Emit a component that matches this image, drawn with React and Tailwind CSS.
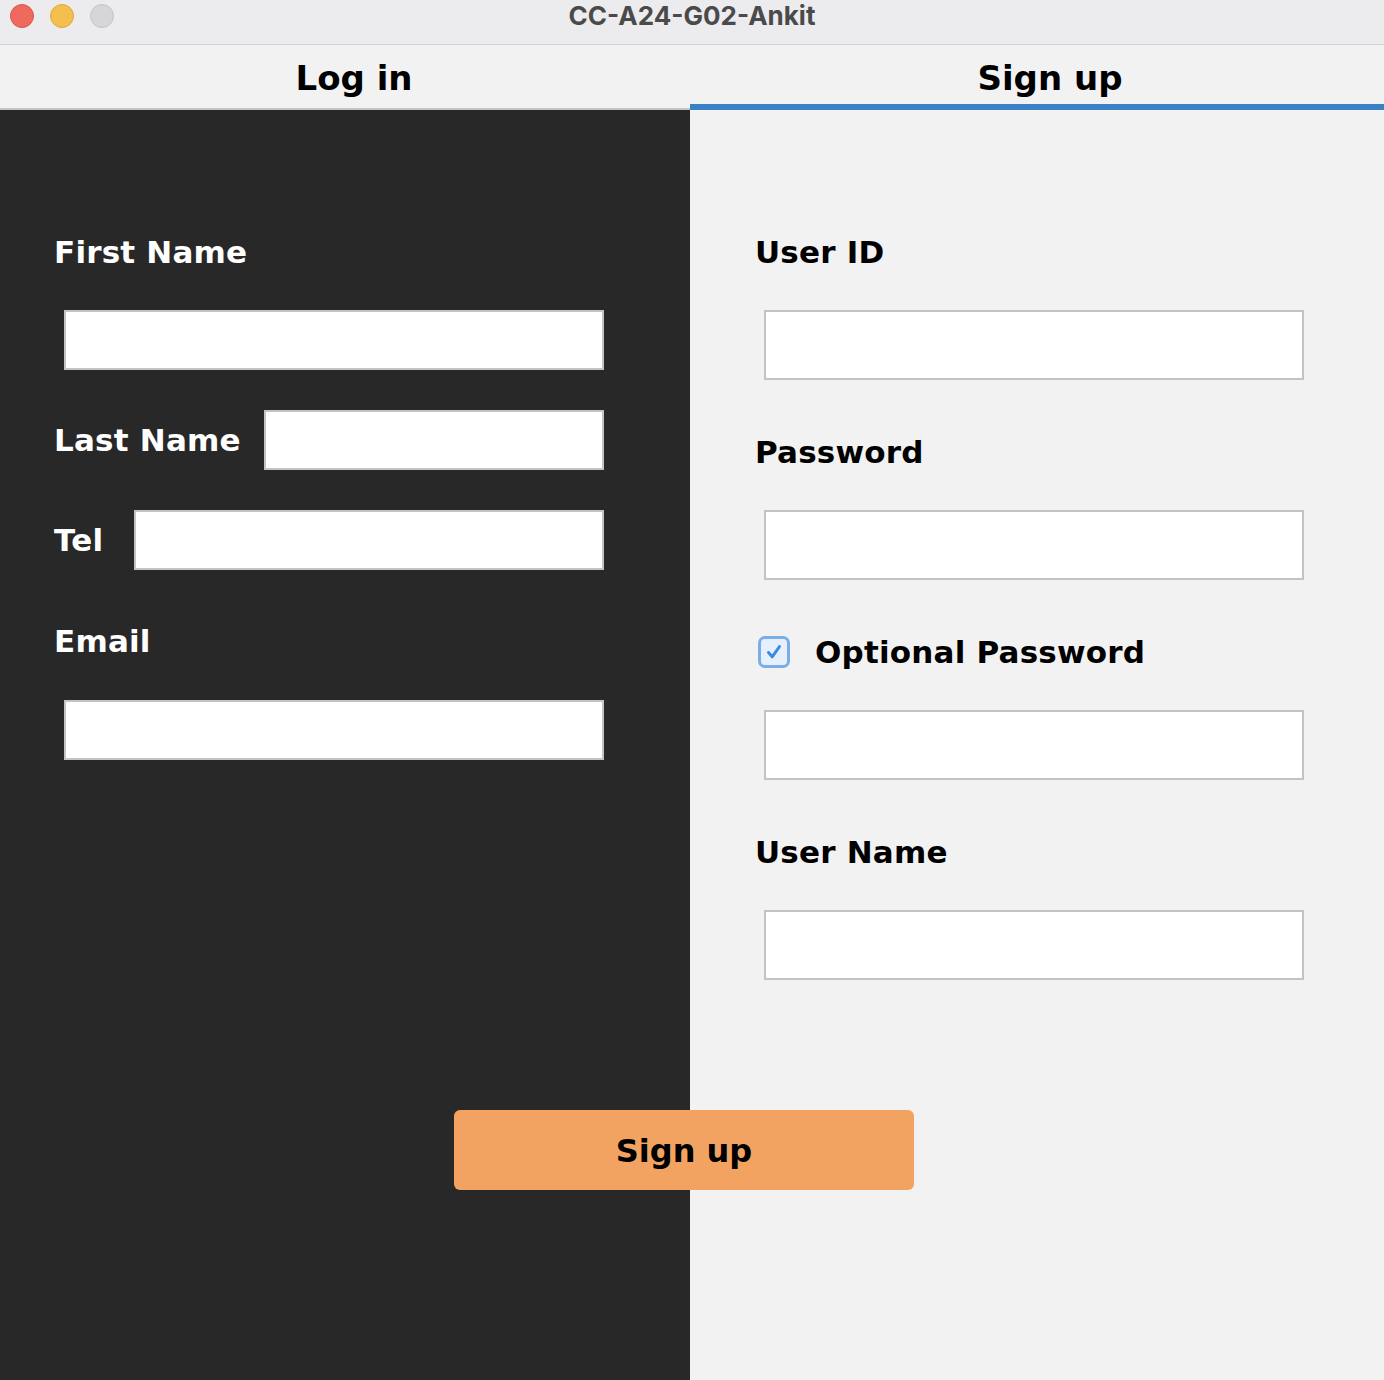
import React from "react";

const font = { fontFamily: '"DejaVu Sans", "Noto Sans", sans-serif' };

function Field({ className = "" }) {
  return (
    <input
      type="text"
      className={`block bg-white border-2 border-[#c3c3c3] outline-none ${className}`}
    />
  );
}

function Label({ children, dark }) {
  return (
    <div
      className={`h-[40px] flex items-center text-[31px] font-bold tracking-[0.2px] leading-none ${
        dark ? "text-white" : "text-black"
      }`}
    >
      {children}
    </div>
  );
}

export default function App() {
  return (
    <div className="relative w-[1384px] h-[1380px] flex flex-col bg-[#f2f2f2]" style={font}>
      <div className="h-[45px] shrink-0 flex items-start relative bg-[#ececee] border-b border-[#d2d2d2]">
        <div className="flex items-center gap-[16px] pl-[10px] pt-[4px]">
          <span className="w-[24px] h-[24px] rounded-full bg-[#ee6a5f] border border-[#d9564c]" />
          <span className="w-[24px] h-[24px] rounded-full bg-[#f5bf4f] border border-[#dca73e]" />
          <span className="w-[24px] h-[24px] rounded-full bg-[#d6d6d8] border border-[#c4c4c6]" />
        </div>
        <div
          className="absolute left-0 right-0 top-0 h-[30px] flex items-center justify-center text-[26px] font-bold text-[#4a4a4a]"
          style={{ fontFamily: 'Inter, "Liberation Sans", sans-serif' }}
        >
          CC-A24-G02-Ankit
        </div>
      </div>

      <div className="h-[65px] shrink-0 flex">
        <div className="w-[690px] flex flex-col">
          <div className="flex-1 flex items-center justify-center pl-[18px] text-[34px] font-bold text-black pt-[4px]">
            Log in
          </div>
          <div className="h-[2px] bg-[#c4c4c4]" />
        </div>
        <div className="flex-1 flex flex-col">
          <div className="flex-1 flex items-center justify-center pl-[26px] text-[34px] font-bold text-black pt-[8px]">
            Sign up
          </div>
          <div className="h-[6px] bg-[#3a80c6]" />
        </div>
      </div>

      <div className="flex-1 flex">
        <div className="w-[690px] bg-[#282828] pl-[54px] pt-[122px]">
          <Label dark>First Name</Label>
          <Field className="ml-[10px] mt-[38px] w-[540px] h-[60px]" />
          <div className="mt-[40px] h-[60px] flex items-center">
            <span className="text-white text-[31px] font-bold tracking-[0.2px] w-[210px]">Last Name</span>
            <Field className="w-[340px] h-[60px]" />
          </div>
          <div className="mt-[40px] h-[60px] flex items-center">
            <span className="text-white text-[31px] font-bold tracking-[0.2px] w-[80px]">Tel</span>
            <Field className="w-[470px] h-[60px]" />
          </div>
          <div className="mt-[51px]">
            <Label dark>Email</Label>
          </div>
          <Field className="ml-[10px] mt-[39px] w-[540px] h-[60px]" />
        </div>

        <div className="flex-1 pl-[65px] pt-[122px]">
          <Label>User ID</Label>
          <Field className="ml-[9px] mt-[38px] w-[540px] h-[70px]" />
          <div className="mt-[52px]">
            <Label>Password</Label>
          </div>
          <Field className="ml-[9px] mt-[38px] w-[540px] h-[70px]" />
          <div className="mt-[52px] h-[40px] flex items-center">
            <span className="ml-[3px] w-[32px] h-[32px] rounded-[7px] border-[3px] border-[#7aaee6] bg-[#e6f0fc] flex items-center justify-center">
              <svg width="20" height="20" viewBox="0 0 20 20">
                <path d="M4.5 10.5 L8.2 14.8 L15.5 4.5" fill="none" stroke="#3a8ae5" strokeWidth="3" strokeLinecap="round" strokeLinejoin="round" />
              </svg>
            </span>
            <span className="ml-[25px] text-[31px] font-bold tracking-[0.2px] text-black">Optional Password</span>
          </div>
          <Field className="ml-[9px] mt-[38px] w-[540px] h-[70px]" />
          <div className="mt-[52px]">
            <Label>User Name</Label>
          </div>
          <Field className="ml-[9px] mt-[38px] w-[540px] h-[70px]" />
        </div>
      </div>

      <button className="absolute left-[454px] top-[1110px] w-[460px] h-[80px] rounded-[6px] bg-[#f2a361] text-black text-[32px] font-bold flex items-center justify-center pt-[2px]">
        Sign up
      </button>
    </div>
  );
}
